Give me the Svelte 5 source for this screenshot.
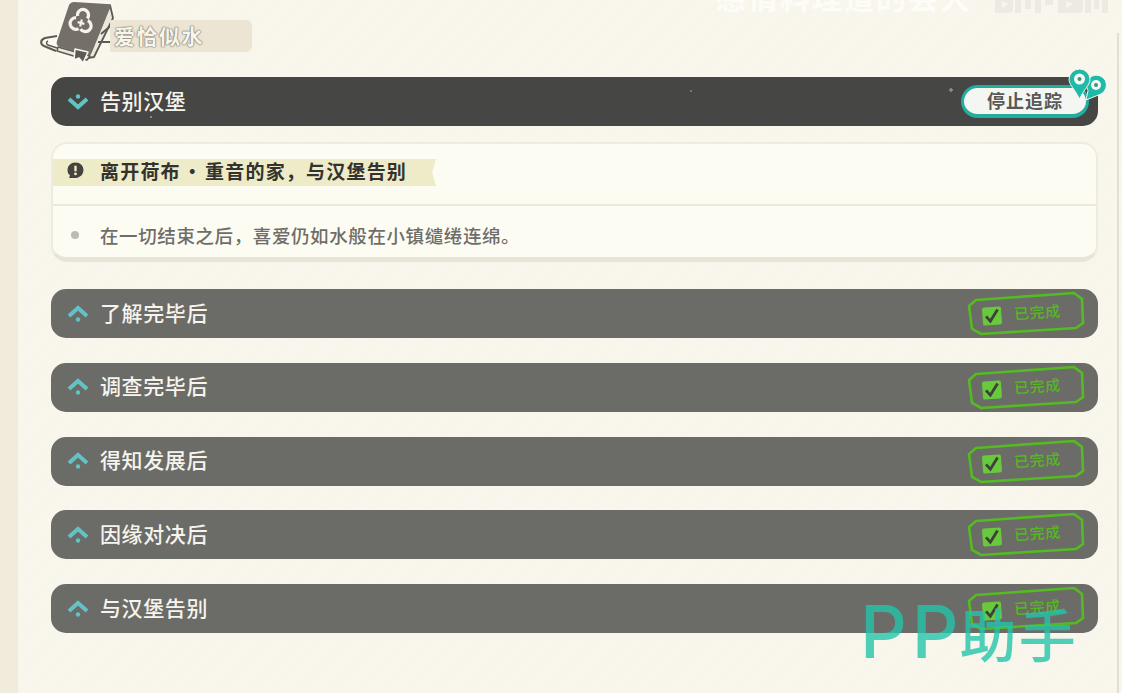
<script>
    // Finished quest steps, in list order
    const doneSteps = ["了解完毕后", "调查完毕后", "得知发展后", "因缘对决后", "与汉堡告别"];
</script>

<div class="page">
    <div class="ghost-title">感情料理道的会大</div>
    <svg class="ghost-logo" viewBox="0 0 114 14" aria-hidden="true">
        <path d="M1 0h18v8c0 3-2 5-5 5H1z" />
        <path d="M21 0h6v13h-6zM31 0h6v9h-6zM41 0h6v13h-6zM51 0h8v5h-8z" />
        <path d="M64 0h25v8c0 3-2 5-5 5H64z" />
        <path d="M91 0h6v13h-6zM100 0h5v9h-5zM108 0h6v13h-6z" />
        <path d="M8 1l7 3-7 4zM72 1l8 3-8 4z" fill="#f7f4ea" />
    </svg>

    <header class="chapter">
        <svg class="book" viewBox="0 0 84 66" aria-hidden="true">
            <!-- pale outline behind everything -->
            <path d="M34 1 73 3l3 13-22 42-8 7-6-4-22-8L3 44l3-6 14-3z" fill="#fbf8ef" stroke="#fbf8ef" stroke-width="3" stroke-linejoin="round" />
            <!-- strap loop on the left -->
            <path d="M19 36 7 38c-5 2-5 6-1 8l12 5" fill="none" stroke="#5d5954" stroke-width="2" />
            <path d="M10 41c-2 1-2 3 0 4l9 3" fill="none" stroke="#5d5954" stroke-width="1.500" />
            <!-- pages and back cover -->
            <path d="M72 5l3 13-19 39-6 1z" fill="#ece8dc" stroke="#5d5954" stroke-width="1.800" stroke-linejoin="round" />
            <path d="M20 47l32 9-3 4-30-9z" fill="#ece8dc" stroke="#5d5954" stroke-width="1.500" stroke-linejoin="round" />
            <path d="M63 34l12-10M60 42l14 0" fill="none" stroke="#5d5954" stroke-width="2" />
            <!-- cover -->
            <path d="M36 2 69 4c3 0 4 2 3 4L54 52c-1 3-3 4-6 3L22 47c-3-1-4-3-3-6L31 5c1-2 3-3 5-3z" fill="#746f69" />
            <!-- bookmark -->
            <path d="M37 49l13 3-5 11-4-5-5 2z" fill="#5d5954" stroke="#fbf8ef" stroke-width="1.500" stroke-linejoin="round" />
            <!-- emblem -->
            <g transform="rotate(14 43 23)" fill="none" stroke="#f7f3e8">
                <path d="M38 17a5.500 5.500 0 1 1 10 0" stroke-width="3.200" />
                <path d="M37 19a5.800 5.800 0 1 0 5 10" stroke-width="3.200" />
                <path d="M49 19a5.800 5.800 0 1 1-5 10" stroke-width="3.200" />
                <path d="M43 19.500v7M39.500 23h7" stroke-width="2.200" />
            </g>
        </svg>
        <div class="chapter-name">爱恰似水</div>
    </header>

    <section class="quest">
        <div class="bar current">
            <svg class="chev" viewBox="0 0 24 18" aria-hidden="true">
                <circle cx="12" cy="3.500" r="2.200" />
                <path d="M3 6l9 8 9-8" fill="none" stroke-width="4" />
            </svg>
            <span class="bar-title">告别汉堡</span>
            <div class="stop">
                停止追踪
                <svg class="pins" viewBox="0 0 40 34" aria-hidden="true">
                    <path d="M20 22.500A10 10 0 1 1 33 26L18 32z" fill="#1fb9a8" stroke="#f4f8f2" stroke-width="1" />
                    <circle cx="28" cy="17" r="5" fill="#f4f8f2" />
                    <circle cx="28" cy="17" r="2" fill="#3f8f88" />
                    <path d="M1 11.500a10.500 10.500 0 1 1 21 0c0 5-6 10-10.500 19.500C7 21.500 1 16.500 1 11.500z" fill="#1fb9a8" stroke="#f4f8f2" stroke-width="1" />
                    <circle cx="11.500" cy="11" r="5.500" fill="#f4f8f2" />
                    <circle cx="11.500" cy="11" r="2" fill="#3f8f88" />
                </svg>
            </div>
        </div>

        <div class="detail">
            <div class="goal-row">
                <div class="goal">
                    <svg class="alert" viewBox="0 0 16 16" aria-hidden="true">
                        <path d="M8 .5c4.400 0 7.500 3 7.500 7s-3 7-7 7.500H2l.8-2.500C1.300 11.500.5 9.700.5 7.500.5 3.500 3.600.5 8 .5z" fill="#45423f" />
                        <path d="M8 3.600v5" stroke="#f2efcf" stroke-width="2.200" />
                        <circle cx="8" cy="11.200" r="1.300" fill="#f2efcf" />
                    </svg>
                    <span>离开荷布 · 重音的家，与汉堡告别</span>
                </div>
            </div>
            <div class="desc-row">
                <i class="dot"></i>
                <span>在一切结束之后，喜爱仍如水般在小镇缱绻连绵。</span>
            </div>
        </div>

        {#each doneSteps as step}
            <div class="bar done">
                <svg class="chev" viewBox="0 0 24 18" aria-hidden="true">
                    <path d="M3 11l9-8 9 8" fill="none" stroke-width="4" />
                    <circle cx="12" cy="14.500" r="2.200" />
                </svg>
                <span class="bar-title">{step}</span>
                <div class="stamp">
                    <svg class="stamp-box" viewBox="0 0 116 42" aria-hidden="true">
                        <path d="M8 8 106 1l8 6 1 24-7 5-95 6-9-5L1 14z" fill="none" stroke="#55bb22" stroke-width="2.600" />
                    </svg>
                    <svg class="tick" viewBox="0 0 20 20" aria-hidden="true">
                        <rect x="0.500" y="1" width="19" height="18" rx="2" fill="#69c93c" />
                        <path d="M4 10l4 5 8-11" fill="none" stroke="#3f3f3c" stroke-width="2.800" />
                    </svg>
                    <span>已完成</span>
                </div>
            </div>
        {/each}
    </section>

    <div class="watermark"><span class="pp">PP</span><span class="zh">助手</span></div>
</div>

<style>
    :global(body) {
        margin: 0;
        background: #f8f5ec;
    }

    .page {
        position: relative;
        box-sizing: border-box;
        width: 1122px;
        height: 693px;
        overflow: hidden;
        padding-left: 18px;
        font-family: "Noto Sans CJK SC", "Noto Sans", sans-serif;
        background: repeating-linear-gradient(135deg, #f9f6ed 0 4px, #f8f5eb 4px 8px);
    }

    /* darker strips on both window edges */
    .page::before {
        content: "";
        position: absolute;
        left: 0;
        top: 0;
        bottom: 0;
        width: 18px;
        background: #f1ebdc;
    }

    .page::after {
        content: "";
        position: absolute;
        left: 1117px;
        top: 33px;
        bottom: 0;
        width: 2px;
        background: #e2ded2;
    }

    .ghost-title {
        position: absolute;
        left: 716px;
        top: -21px;
        font-size: 30px;
        font-weight: 700;
        line-height: 34px;
        color: #fdfcf7;
        letter-spacing: 2px;
        white-space: nowrap;
        filter: blur(0.6px);
    }

    .ghost-logo {
        position: absolute;
        left: 994px;
        top: 0;
        width: 114px;
        height: 14px;
        fill: #eceae2;
    }

    .chapter {
        display: flex;
        align-items: flex-start;
        height: 77px;
        padding-left: 20px;
    }

    .book {
        width: 84px;
        height: 66px;
        flex: none;
        position: relative;
        z-index: 1;
    }

    .chapter-name {
        box-sizing: border-box;
        width: 142px;
        height: 32px;
        margin: 20px 0 0 -12px;
        padding-left: 4px;
        font-size: 21px;
        font-weight: 700;
        letter-spacing: 1.500px;
        line-height: 31px;
        color: #f8f5ea;
        background: #ece5d3;
        border-radius: 1px 6px 6px 1px;
        text-shadow: 0 0 2px #7d7871, 0 0 1px #7d7871, 0 0 1px #7d7871;
        position: relative;
        z-index: 2;
    }

    .quest {
        width: 1047px;
        margin-left: 33px;
        display: flex;
        flex-direction: column;
    }

    .bar {
        position: relative;
        box-sizing: border-box;
        display: flex;
        align-items: center;
        width: 1047px;
        height: 49px;
        padding-left: 15px;
        border-radius: 15px;
        color: #f6f4ed;
        margin-bottom: 24.750px;
    }

    .current {
        background:
            radial-gradient(circle at 900px 13px, #8a8a86 0 1.500px, transparent 2px),
            radial-gradient(circle at 640px 14px, #77776f 0 1px, transparent 1.500px),
            radial-gradient(circle at 100px 40px, #8a8a86 0 1px, transparent 1.500px),
            #464644;
        margin-bottom: 16px;
    }

    .done {
        background: #6b6b67;
    }

    .chev {
        width: 24px;
        height: 18px;
        flex: none;
        fill: #63c3c4;
        stroke: #63c3c4;
    }

    .chev circle {
        stroke: none;
    }

    .bar-title {
        margin: -4px 0 0 10px;
        font-size: 21px;
        font-weight: 500;
        letter-spacing: 0.600px;
        line-height: 26px;
    }

    .stop {
        position: absolute;
        left: 910px;
        top: 8px;
        box-sizing: border-box;
        width: 128px;
        height: 33px;
        border: 3px solid #22ad9f;
        border-bottom-width: 4px;
        border-radius: 17px;
        background: #f3f6f1;
        color: #5a5957;
        font-size: 18px;
        font-weight: 700;
        letter-spacing: 1px;
        line-height: 25px;
        text-align: center;
    }

    .pins {
        position: absolute;
        left: 104px;
        top: -20px;
        width: 40px;
        height: 34px;
    }

    .stamp {
        position: absolute;
        left: 917px;
        top: 3px;
        width: 116px;
        height: 42px;
        color: #55b822;
        font-size: 15px;
        font-weight: 500;
    }

    .stamp-box {
        position: absolute;
        inset: 0;
        width: 116px;
        height: 42px;
        overflow: visible;
    }

    .tick {
        position: absolute;
        left: 14px;
        top: 14px;
        width: 20px;
        height: 20px;
        transform: rotate(-4deg);
    }

    .stamp span {
        position: absolute;
        left: 46px;
        top: 9px;
        letter-spacing: 0.500px;
        line-height: 22px;
        transform: rotate(-4deg);
    }

    .detail {
        box-sizing: border-box;
        width: 1047px;
        height: 120px;
        margin-bottom: 27px;
        border: 2px solid #f0ecdd;
        border-bottom: 5px solid #e8e4d6;
        border-radius: 16px;
        background: #fdfcf3;
    }

    .goal-row {
        box-sizing: border-box;
        height: 62px;
        padding-top: 15px;
        border-bottom: 2px solid #ece9db;
    }

    .goal {
        box-sizing: border-box;
        display: flex;
        align-items: center;
        width: 383px;
        height: 27px;
        padding: 0 0 4px 14px;
        background: #edebc8;
        clip-path: polygon(0 0, 100% 0, 99% 50%, 100% 100%, 0 100%);
        color: #33322f;
        font-size: 19px;
        font-weight: 700;
        letter-spacing: 1.200px;
        word-spacing: -3.500px;
        white-space: nowrap;
    }

    .alert {
        width: 17px;
        height: 17px;
        flex: none;
        margin-right: 16px;
    }

    .desc-row {
        box-sizing: border-box;
        display: flex;
        align-items: center;
        height: 51px;
        padding: 6px 0 0 18px;
        color: #6f6d69;
        font-size: 18.500px;
        font-weight: 500;
        letter-spacing: 0.600px;
    }

    .dot {
        width: 8px;
        height: 8px;
        margin-right: 21px;
        border-radius: 50%;
        background: #bdbcb4;
    }

    .watermark {
        position: absolute;
        left: 860px;
        top: 590px;
        display: flex;
        align-items: center;
        height: 84px;
        color: rgba(36, 196, 170, 0.8);
    }

    .pp {
        font-family: Inter, "Liberation Sans", sans-serif;
        font-size: 73px;
        font-weight: 500;
        letter-spacing: 5px;
        line-height: 84px;
    }

    .zh {
        margin-left: -4px;
        font-size: 57px;
        font-weight: 500;
        letter-spacing: 2px;
        line-height: 84px;
    }
</style>
